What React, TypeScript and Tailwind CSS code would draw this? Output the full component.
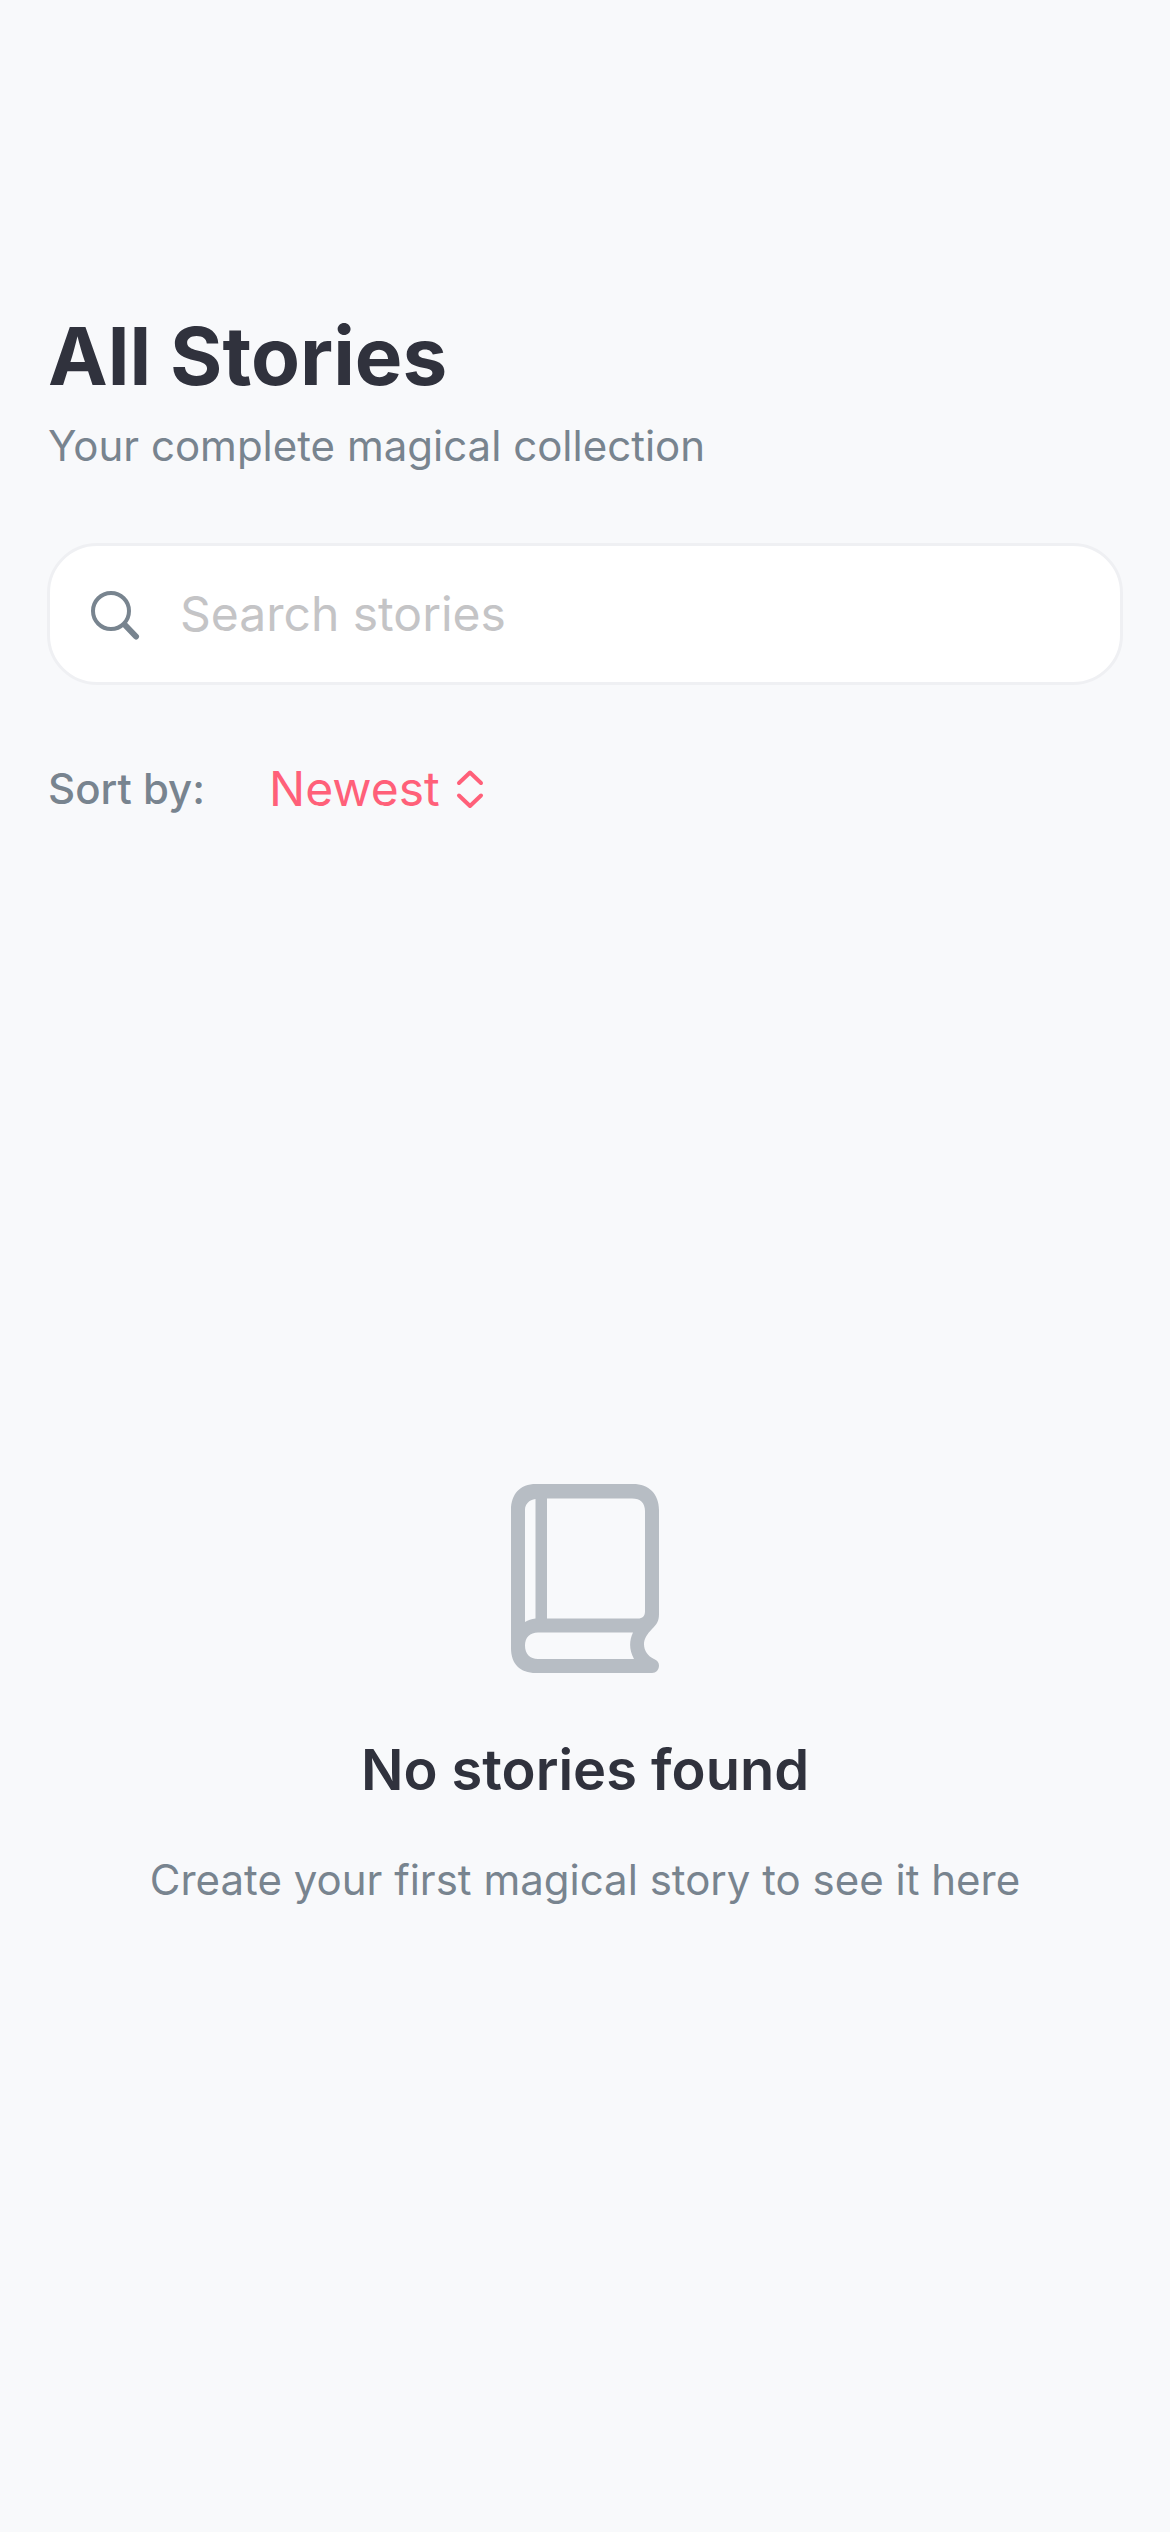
import { useState } from "react";

function SearchIcon() {
  return (
    <svg className="size-14 shrink-0" viewBox="0 0 56 56" fill="none" stroke="currentColor" strokeLinecap="round" aria-hidden="true">
      <circle cx="27" cy="25" r="18" strokeWidth="4" />
      <path d="M41 39 L52 50.5" strokeWidth="6" />
    </svg>
  );
}

function ChevronsIcon() {
  return (
    <svg className="h-10 w-7 shrink-0" viewBox="0 0 28 40" fill="none" stroke="currentColor" strokeWidth="4" strokeLinecap="round" strokeLinejoin="round" aria-hidden="true">
      <path d="M3 14 L14 3.5 L25 14" />
      <path d="M3 26.5 L14 37 L25 26.5" />
    </svg>
  );
}

function BookIcon() {
  return (
    <svg className="h-[190px] w-[148px]" viewBox="0 0 148 190" fill="currentColor" fillRule="evenodd" aria-hidden="true">
      <path d="M25 0 H122 C138 0 148 10 148 26 V130 C148 137 146 140 141 145 C136 150 133 155 133 160 C133 167 137 172 143 175 C146.500 176.500 148 178.500 148 181.500 C148 186 145 189 141 189 H25 C9 189 0 180 0 164 V26 C0 10 9 0 25 0 Z M24.500 15 C18 16 14 20 14 26 V138 C17 136 20.500 135 24.500 134.500 Z M36 14.500 V134.500 H127 C131.500 134.500 134 132 134 127.500 V27 C134 19 129.500 14.500 121 14.500 Z M27 148.500 C19 148.500 14 153.500 14 161.500 C14 170 19 175 27 175 H123 C118 166 118 157 122 148.500 Z" />
    </svg>
  );
}

export default function App() {
  const [query, setQuery] = useState("");
  const [sort, setSort] = useState("newest");

  return (
    <main className="flex min-h-screen flex-col bg-[#f8f9fb] px-12 pt-[304px] font-['Inter',sans-serif] text-[#78848f]">
      <header className="flex flex-col gap-2">
        <h1 className="text-[80px] leading-[104px] font-bold text-[#30323d]">All Stories</h1>
        <p className="text-[42px] leading-[60px]">Your complete magical collection</p>
      </header>

      <label className="-mx-px mt-[67px] flex h-[142px] items-center gap-10 rounded-[50px] border-3 border-[#eff0f3] bg-white px-[34px]">
        <SearchIcon />
        <input
          type="search"
          aria-label="Search stories"
          placeholder="Search stories"
          value={query}
          onChange={(event) => setQuery(event.target.value)}
          className="min-w-0 flex-1 bg-transparent text-[48px] leading-[64px] text-[#30323d] outline-none placeholder:text-[#c4c4c6]"
        />
      </label>

      <div className="mt-[72px] flex h-16 items-center">
        <label htmlFor="sort" className="text-[42px] leading-[60px] font-medium">
          Sort by:
        </label>
        <div className="ml-16 flex items-center gap-4 text-[#ff6079]">
          <select
            id="sort"
            value={sort}
            onChange={(event) => setSort(event.target.value)}
            className="field-sizing-content appearance-none bg-transparent text-[48px] leading-[64px] outline-none"
          >
            <option value="newest">Newest</option>
            <option value="oldest">Oldest</option>
          </select>
          <ChevronsIcon />
        </div>
      </div>

      <section className="flex flex-1 flex-col items-center justify-center pt-10 text-center">
        <div className="text-[#b7bdc4]">
          <BookIcon />
        </div>
        <h2 className="mt-[60px] text-[56px] leading-[72px] font-semibold text-[#30323d]">No stories found</h2>
        <p className="mt-11 text-[42px] leading-[60px]">Create your first magical story to see it here</p>
      </section>
    </main>
  );
}
